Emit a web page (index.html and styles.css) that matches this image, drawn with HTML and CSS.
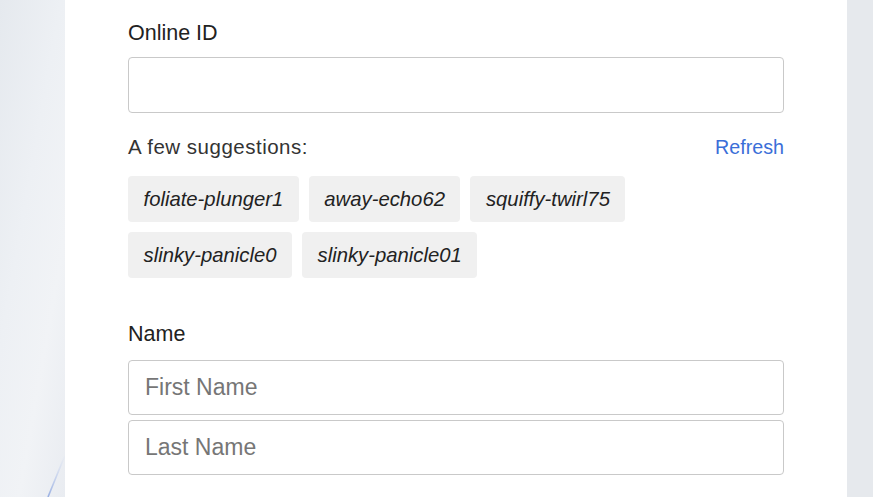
FILE: index.html
```html
<!DOCTYPE html>
<html lang="en">
<head>
<meta charset="utf-8">
<title>Online ID</title>
<link rel="stylesheet" href="styles.css">
</head>
<body>
<div class="page">
  <div class="gutter-left">
    <svg class="streak" width="65" height="60" viewBox="0 0 65 60" aria-hidden="true">
      <defs>
        <linearGradient id="lg" x1="0" y1="1" x2="0" y2="0">
          <stop offset="0" stop-color="#8fa8e0" stop-opacity="0.9"/>
          <stop offset="1" stop-color="#b9c9ee" stop-opacity="0"/>
        </linearGradient>
      </defs>
      <path d="M48 60 L65 18" stroke="url(#lg)" stroke-width="1.6" fill="none"/>
    </svg>
  </div>
  <main class="panel">
    <label class="field-label first" for="oid">Online ID</label>
    <input id="oid" class="text-input" type="text">
    <div class="suggest-head">
      <span class="suggest-title">A few suggestions:</span>
      <a class="refresh" href="#">Refresh</a>
    </div>
    <div class="chips">
      <button class="chip" type="button">foliate-plunger1</button>
      <button class="chip" type="button">away-echo62</button>
      <button class="chip" type="button">squiffy-twirl75</button>
      <button class="chip" type="button">slinky-panicle0</button>
      <button class="chip" type="button">slinky-panicle01</button>
    </div>
    <label class="field-label name" for="fn">Name</label>
    <div class="name-group">
      <input id="fn" class="text-input short" type="text" placeholder="First Name">
      <input id="ln" class="text-input short" type="text" placeholder="Last Name">
    </div>
  </main>
  <div class="gutter-right"></div>
</div>
</body>
</html>
```

FILE: styles.css
```css
* { box-sizing: border-box; }
html, body { margin: 0; padding: 0; }
body {
  font-family: "Liberation Sans", Arial, Helvetica, sans-serif;
  color: #222;
  background: #e8ecf0;
  width: 873px;
  height: 497px;
  overflow: hidden;
}
.page {
  display: grid;
  grid-template-columns: 65px 782px 26px;
  height: 497px;
}
.gutter-left {
  display: flex;
  flex-direction: column;
  background: linear-gradient(100deg, #e5e9ee 0%, #edf0f4 40%, #f1f3f6 70%, #e9ecf1 100%);
}
.streak { margin-top: auto; display: block; }
.gutter-right {
  background: #e6e9ed;
}
.panel {
  background: #ffffff;
  padding: 20px 63px 0 63px;
  display: flex;
  flex-direction: column;
}
.field-label {
  font-size: 21.5px;
  line-height: 26px;
  color: #222;
}
.field-label.first { margin-bottom: 11px; }
.field-label.name { margin-top: 43px; margin-bottom: 13px; }
.text-input {
  display: block;
  width: 656px;
  height: 56px;
  border: 1px solid #c9c9c9;
  border-radius: 4px;
  padding: 0 16px;
  font-family: "Liberation Sans", Arial, sans-serif;
  font-size: 23px;
  color: #222;
  background: #fff;
  outline: none;
}
.text-input.short { height: 55px; }
.text-input::placeholder { color: #767676; }
.suggest-head {
  display: flex;
  justify-content: space-between;
  align-items: baseline;
  margin-top: 22px;
  line-height: 24px;
}
.suggest-title {
  font-size: 20.5px;
  letter-spacing: 0.5px;
  color: #333;
}
.refresh {
  font-size: 19.7px;
  color: #3a6ed8;
  text-decoration: none;
}
.chips {
  display: flex;
  flex-wrap: wrap;
  gap: 10px;
  margin-top: 17px;
  width: 520px;
}
.chip {
  height: 46px;
  padding: 0 15.5px;
  border: none;
  border-radius: 4px;
  background: #f0f0f0;
  font-family: "Liberation Sans", Arial, sans-serif;
  font-style: italic;
  font-size: 20.3px;
  color: #222;
  line-height: 46px;
}
.name-group {
  display: flex;
  flex-direction: column;
  gap: 5px;
}
```
